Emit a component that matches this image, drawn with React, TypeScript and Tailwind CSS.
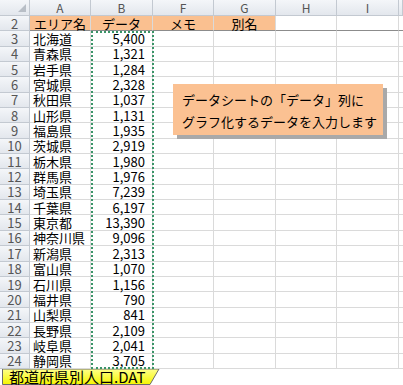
import React from "react";

const rows: [string, string][] = [
  ["北海道", "5,400"],
  ["青森県", "1,321"],
  ["岩手県", "1,284"],
  ["宮城県", "2,328"],
  ["秋田県", "1,037"],
  ["山形県", "1,131"],
  ["福島県", "1,935"],
  ["茨城県", "2,919"],
  ["栃木県", "1,980"],
  ["群馬県", "1,976"],
  ["埼玉県", "7,239"],
  ["千葉県", "6,197"],
  ["東京都", "13,390"],
  ["神奈川県", "9,096"],
  ["新潟県", "2,313"],
  ["富山県", "1,070"],
  ["石川県", "1,156"],
  ["福井県", "790"],
  ["山梨県", "841"],
  ["長野県", "2,109"],
  ["岐阜県", "2,041"],
  ["静岡県", "3,705"],
];

const cols = ["A", "B", "F", "G", "H", "I"];

const hdr =
  "flex items-center justify-center bg-gradient-to-b from-[#f4f6f9] to-[#e3e7ed] border-r border-b border-[#c3c9d1] text-[12px] leading-none text-[#555]";
const cell = "border-r border-b border-[#dadada] flex items-center text-[13px] text-black leading-none";

export default function App() {
  return (
    <div className="w-[403px] h-[385px] bg-white overflow-hidden relative font-['Noto_Sans_CJK_JP',sans-serif]">
      {/* sheet grid */}
      <div className="grid grid-cols-[30px_61px_62px_61px_62px_61px_62px_4px] grid-rows-[16px_repeat(23,15.35px)]">
        {/* column header row */}
        <div className={hdr + " relative"}>
          <svg className="absolute right-[3px] bottom-[3px]" width="8" height="8" viewBox="0 0 8 8">
            <polygon points="8,0 8,8 0,8" fill="#b8bec6" />
          </svg>
        </div>
        {cols.map((c) => (
          <div key={c} className={hdr}>
            {c}
          </div>
        ))}
        <div className={hdr} />

        {/* row 2: field names */}
        <div className={hdr + " text-[13px]"}>2</div>
        <div className={cell + " justify-center bg-[#fac090] border-b-[#8c8c8c]"}>エリア名</div>
        <div className={cell + " justify-center bg-[#fac090] border-b-[#8c8c8c]"}>データ</div>
        <div className={cell + " justify-center bg-[#fac090] border-b-[#8c8c8c]"}>メモ</div>
        <div className={cell + " justify-center bg-[#fac090] border-b-[#8c8c8c]"}>別名</div>
        <div className={cell + " border-b-[#8c8c8c]"} />
        <div className={cell + " border-b-[#8c8c8c]"} />
        <div className={cell + " border-b-[#8c8c8c] border-r-0"} />

        {rows.map(([name, value], i) => (
          <React.Fragment key={name}>
            <div className={hdr + " text-[13px]"}>{i + 3}</div>
            <div className={cell + " pl-[3px]"}>{name}</div>
            <div className={cell + " justify-end pr-[7px]"}>{value}</div>
            <div className={cell} />
            <div className={cell} />
            <div className={cell} />
            <div className={cell} />
            <div className={cell + " border-r-0"} />
          </React.Fragment>
        ))}
      </div>

      {/* copy marquee around column B */}
      <div className="absolute left-[91px] top-[31px] w-[63px] h-[338px] border-2 border-dotted border-[#3a9468] pointer-events-none" />

      {/* callout */}
      <div className="absolute left-[173px] top-[84px] w-[210px] h-[51px] bg-[#fbc192] shadow-[4px_4px_0_#a9a9a9] pl-[9px] pt-[5px] text-[13px] leading-[22px] text-black">
        <div>データシートの「データ」列に</div>
        <div>グラフ化するデータを入力します</div>
      </div>

      {/* sheet tab bar */}
      <div className="flex h-[16px]">
        <div className="relative w-[160px] h-[16px] ml-[2px]">
          <svg className="absolute inset-0" width="160" height="16" viewBox="0 0 160 16">
            <defs>
              <linearGradient id="tabfill" x1="0" y1="0" x2="0" y2="1">
                <stop offset="0" stopColor="#ffff8a" />
                <stop offset="1" stopColor="#f5f500" />
              </linearGradient>
            </defs>
            <polygon points="0.5,0 157,0 148,15.5 0.5,15.5" fill="url(#tabfill)" stroke="#6b6b6b" strokeWidth="1" />
          </svg>
          <div className="relative pl-[7px] text-[15px] leading-[15px] text-black whitespace-nowrap">
            都道府県別人口.DAT
          </div>
        </div>
      </div>
    </div>
  );
}
